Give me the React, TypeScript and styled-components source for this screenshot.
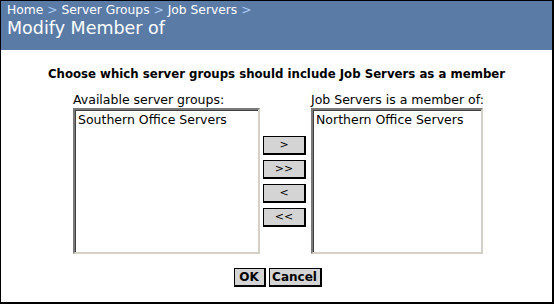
import React from 'react';
import styled, { createGlobalStyle } from 'styled-components';

const GlobalStyle = createGlobalStyle`
  * { box-sizing: border-box; }
  body {
    margin: 0;
    background: #fff;
    font-family: "DejaVu Sans", Verdana, sans-serif;
  }
`

const Frame = styled.div`
  width: 554px;
  height: 304px;
  border: 1px solid #000;
  border-right-width: 2px;
  border-bottom-width: 2px;
  display: flex;
  flex-direction: column;
  background: #fff;
`

const Header = styled.div`
  height: 49px;
  background: #5b7ba7;
  color: #fff;
  padding: 1px 0 0 6px;
`

const Crumbs = styled.div`
  font-size: 12.3px;
  line-height: 16px;
`

const Sep = styled.span`
  color: #a9cdf5;
`

const Title = styled.div`
  font-size: 17.5px;
  line-height: 20px;
`

const Body = styled.div`
  display: flex;
  flex-direction: column;
  align-items: center;
  padding-top: 17px;
`

const Heading = styled.div`
  font-size: 11.75px;
  font-weight: bold;
  line-height: 14px;
  color: #000;
`

const Picker = styled.div`
  display: grid;
  grid-template-columns: 187px 45px 172px;
  grid-template-rows: auto 146px;
  column-gap: 3px;
  margin-top: 11px;
  margin-left: 3px;
`

const Label = styled.div`
  font-size: 12.5px;
  line-height: 15px;
  padding-bottom: 1px;
  white-space: nowrap;
`

const ListBox = styled.div`
  border-style: solid;
  border-width: 2px;
  border-color: #7a7a7a #d4d0c8 #d4d0c8 #7a7a7a;
  box-shadow: inset 1px 1px 0 #404040;
  padding: 2px 3px;
  font-size: 12.5px;
  line-height: 15px;
  background: #fff;
`

const Movers = styled.div`
  display: flex;
  flex-direction: column;
  justify-content: center;
  gap: 5px;
  margin-right: 2px;
`

const Btn = styled.button<{ $w?: number }>`
  height: 19px;
  width: ${p => (p.$w ? `${p.$w}px` : '100%')};
  padding: 0;
  background: #d4d4d4;
  border: 1px solid #000;
  border-right-width: 2px;
  border-bottom-width: 2px;
  font-family: "DejaVu Sans", Verdana, sans-serif;
  font-size: 11px;
  color: #000;
  line-height: 15px;
`

const BoldBtn = styled(Btn)`
  font-weight: bold;
  font-size: 12px;
`

const Actions = styled.div`
  display: flex;
  gap: 3px;
  margin-top: 14px;
  margin-left: 2px;
`

export default function App() {
  return (
    <>
      <GlobalStyle />
      <Frame>
        <Header>
          <Crumbs>
            Home <Sep>&gt;</Sep> Server Groups <Sep>&gt;</Sep> Job Servers <Sep>&gt;</Sep>
          </Crumbs>
          <Title>Modify Member of</Title>
        </Header>
        <Body>
          <Heading>Choose which server groups should include Job Servers as a member</Heading>
          <Picker>
            <Label>Available server groups:</Label>
            <div />
            <Label>Job Servers is a member of:</Label>
            <ListBox>Southern Office Servers</ListBox>
            <Movers>
              <Btn>&gt;</Btn>
              <Btn>&gt;&gt;</Btn>
              <Btn>&lt;</Btn>
              <Btn>&lt;&lt;</Btn>
            </Movers>
            <ListBox>Northern Office Servers</ListBox>
          </Picker>
          <Actions>
            <BoldBtn $w={32}>OK</BoldBtn>
            <BoldBtn $w={53}>Cancel</BoldBtn>
          </Actions>
        </Body>
      </Frame>
    </>
  );
}
